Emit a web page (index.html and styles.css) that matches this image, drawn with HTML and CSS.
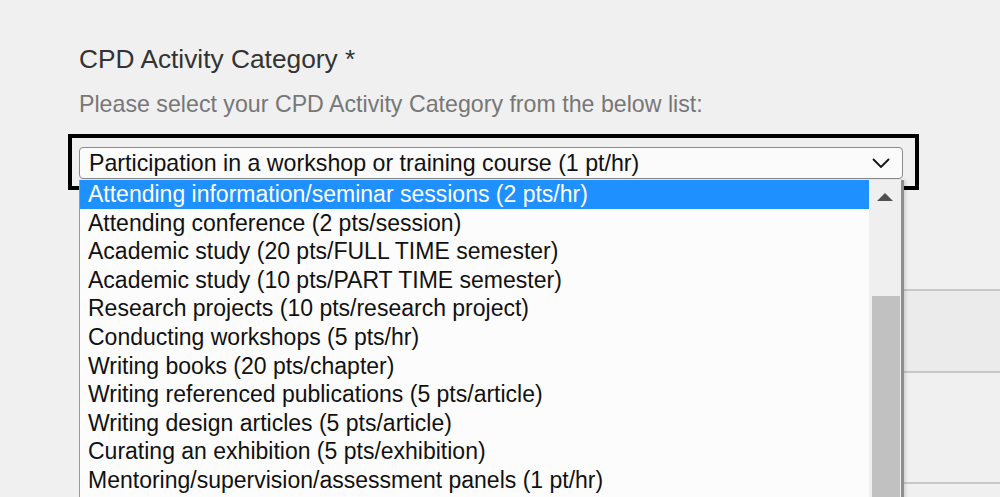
FILE: index.html
```html
<!DOCTYPE html>
<html>
<head>
<meta charset="utf-8">
<link rel="stylesheet" href="styles.css">
</head>
<body>
<div class="page">
  <div class="field">
    <h2 class="label">CPD Activity Category *</h2>
    <p class="hint">Please select your CPD Activity Category from the below list:</p>
    <div class="focus-ring">
      <div class="select">
        <span class="select-text">Participation in a workshop or training course (1 pt/hr)</span>
        <svg class="chevron" width="18" height="10" viewBox="0 0 18 10"><path d="M1 1 L9 9 L17 1" fill="none" stroke="#111" stroke-width="1.8"/></svg>
      </div>
    </div>
  </div>
  <div class="behind">
    <div class="row row-a"></div>
    <div class="row row-b"></div>
    <div class="row row-c"></div>
  </div>
  <div class="listbox">
    <ul class="options">
      <li class="opt selected">Attending information/seminar sessions (2 pts/hr)</li>
      <li class="opt">Attending conference (2 pts/session)</li>
      <li class="opt">Academic study (20 pts/FULL TIME semester)</li>
      <li class="opt">Academic study (10 pts/PART TIME semester)</li>
      <li class="opt">Research projects (10 pts/research project)</li>
      <li class="opt">Conducting workshops (5 pts/hr)</li>
      <li class="opt">Writing books (20 pts/chapter)</li>
      <li class="opt">Writing referenced publications (5 pts/article)</li>
      <li class="opt">Writing design articles (5 pts/article)</li>
      <li class="opt">Curating an exhibition (5 pts/exhibition)</li>
      <li class="opt">Mentoring/supervision/assessment panels (1 pt/hr)</li>
    </ul>
    <div class="scrollbar">
      <div class="arrow-up"></div>
      <div class="thumb"></div>
    </div>
  </div>
</div>
</body>
</html>
```
FILE: styles.css
```css
html, body {
  margin: 0;
  padding: 0;
  background: #f0f0f0;
  overflow: hidden;
  height: 497px;
}
.page {
  position: relative;
  width: 1000px;
  height: 497px;
  font-family: "Liberation Sans", Arial, sans-serif;
}
.field {
  padding: 42px 0 0 68px;
}
.label {
  margin: 0 0 0 11px;
  font-size: 26.3px;
  font-weight: normal;
  color: #333333;
  line-height: 34px;
}
.hint {
  margin: 14px 0 0 11px;
  font-size: 23.2px;
  color: #777777;
  line-height: 28px;
}
.focus-ring {
  margin-top: 16px;
  width: 836px;
  border: 4px solid #000;
  padding: 9px 0 0 7px;
  box-sizing: content-box;
  height: 39px;
}
.select {
  height: 30px;
  border: 1px solid #8a8a8a;
  border-radius: 4px;
  background: #fbfbfb;
  display: flex;
  align-items: center;
  justify-content: space-between;
  padding: 0 12px 0 9px;
  box-sizing: content-box;
  width: 801px;
}
.select-text {
  font-size: 23.2px;
  color: #111;
}
.chevron {
  display: block;
}
.behind {
  margin-top: 99px;
  margin-left: 79px;
}
.row {
  border-bottom: 2px solid #c8c8c8;
}
.row-a {
  height: 0;
}
.row-b {
  height: 80px;
  background: #ebebeb;
}
.row-c {
  height: 109px;
  background: #f0f0f0;
}
.listbox {
  position: absolute;
  left: 79px;
  top: 180px;
  width: 821px;
  height: 330px;
  background: #fcfcfc;
  border-left: 1px solid #9a9a9a;
  border-right: 3px solid #8e8e8e;
  box-shadow: 2px 0 3px rgba(0,0,0,0.12);
  display: flex;
}
.options {
  list-style: none;
  margin: 0;
  padding: 0;
  flex: 1;
}
.opt {
  height: 28.6px;
  line-height: 28.6px;
  padding-left: 8px;
  font-size: 23px;
  color: #111;
  white-space: nowrap;
}
.opt.selected {
  background: #1e90ff;
  color: #fff;
}
.scrollbar {
  width: 32px;
  background: #efefef;
  position: relative;
}
.arrow-up {
  width: 0;
  height: 0;
  margin: 13px auto 0;
  border-left: 8px solid transparent;
  border-right: 8px solid transparent;
  border-bottom: 8px solid #505050;
}
.thumb {
  position: absolute;
  left: 3px;
  right: 1px;
  top: 116px;
  bottom: 0;
  background: #c1c1c1;
}
```
